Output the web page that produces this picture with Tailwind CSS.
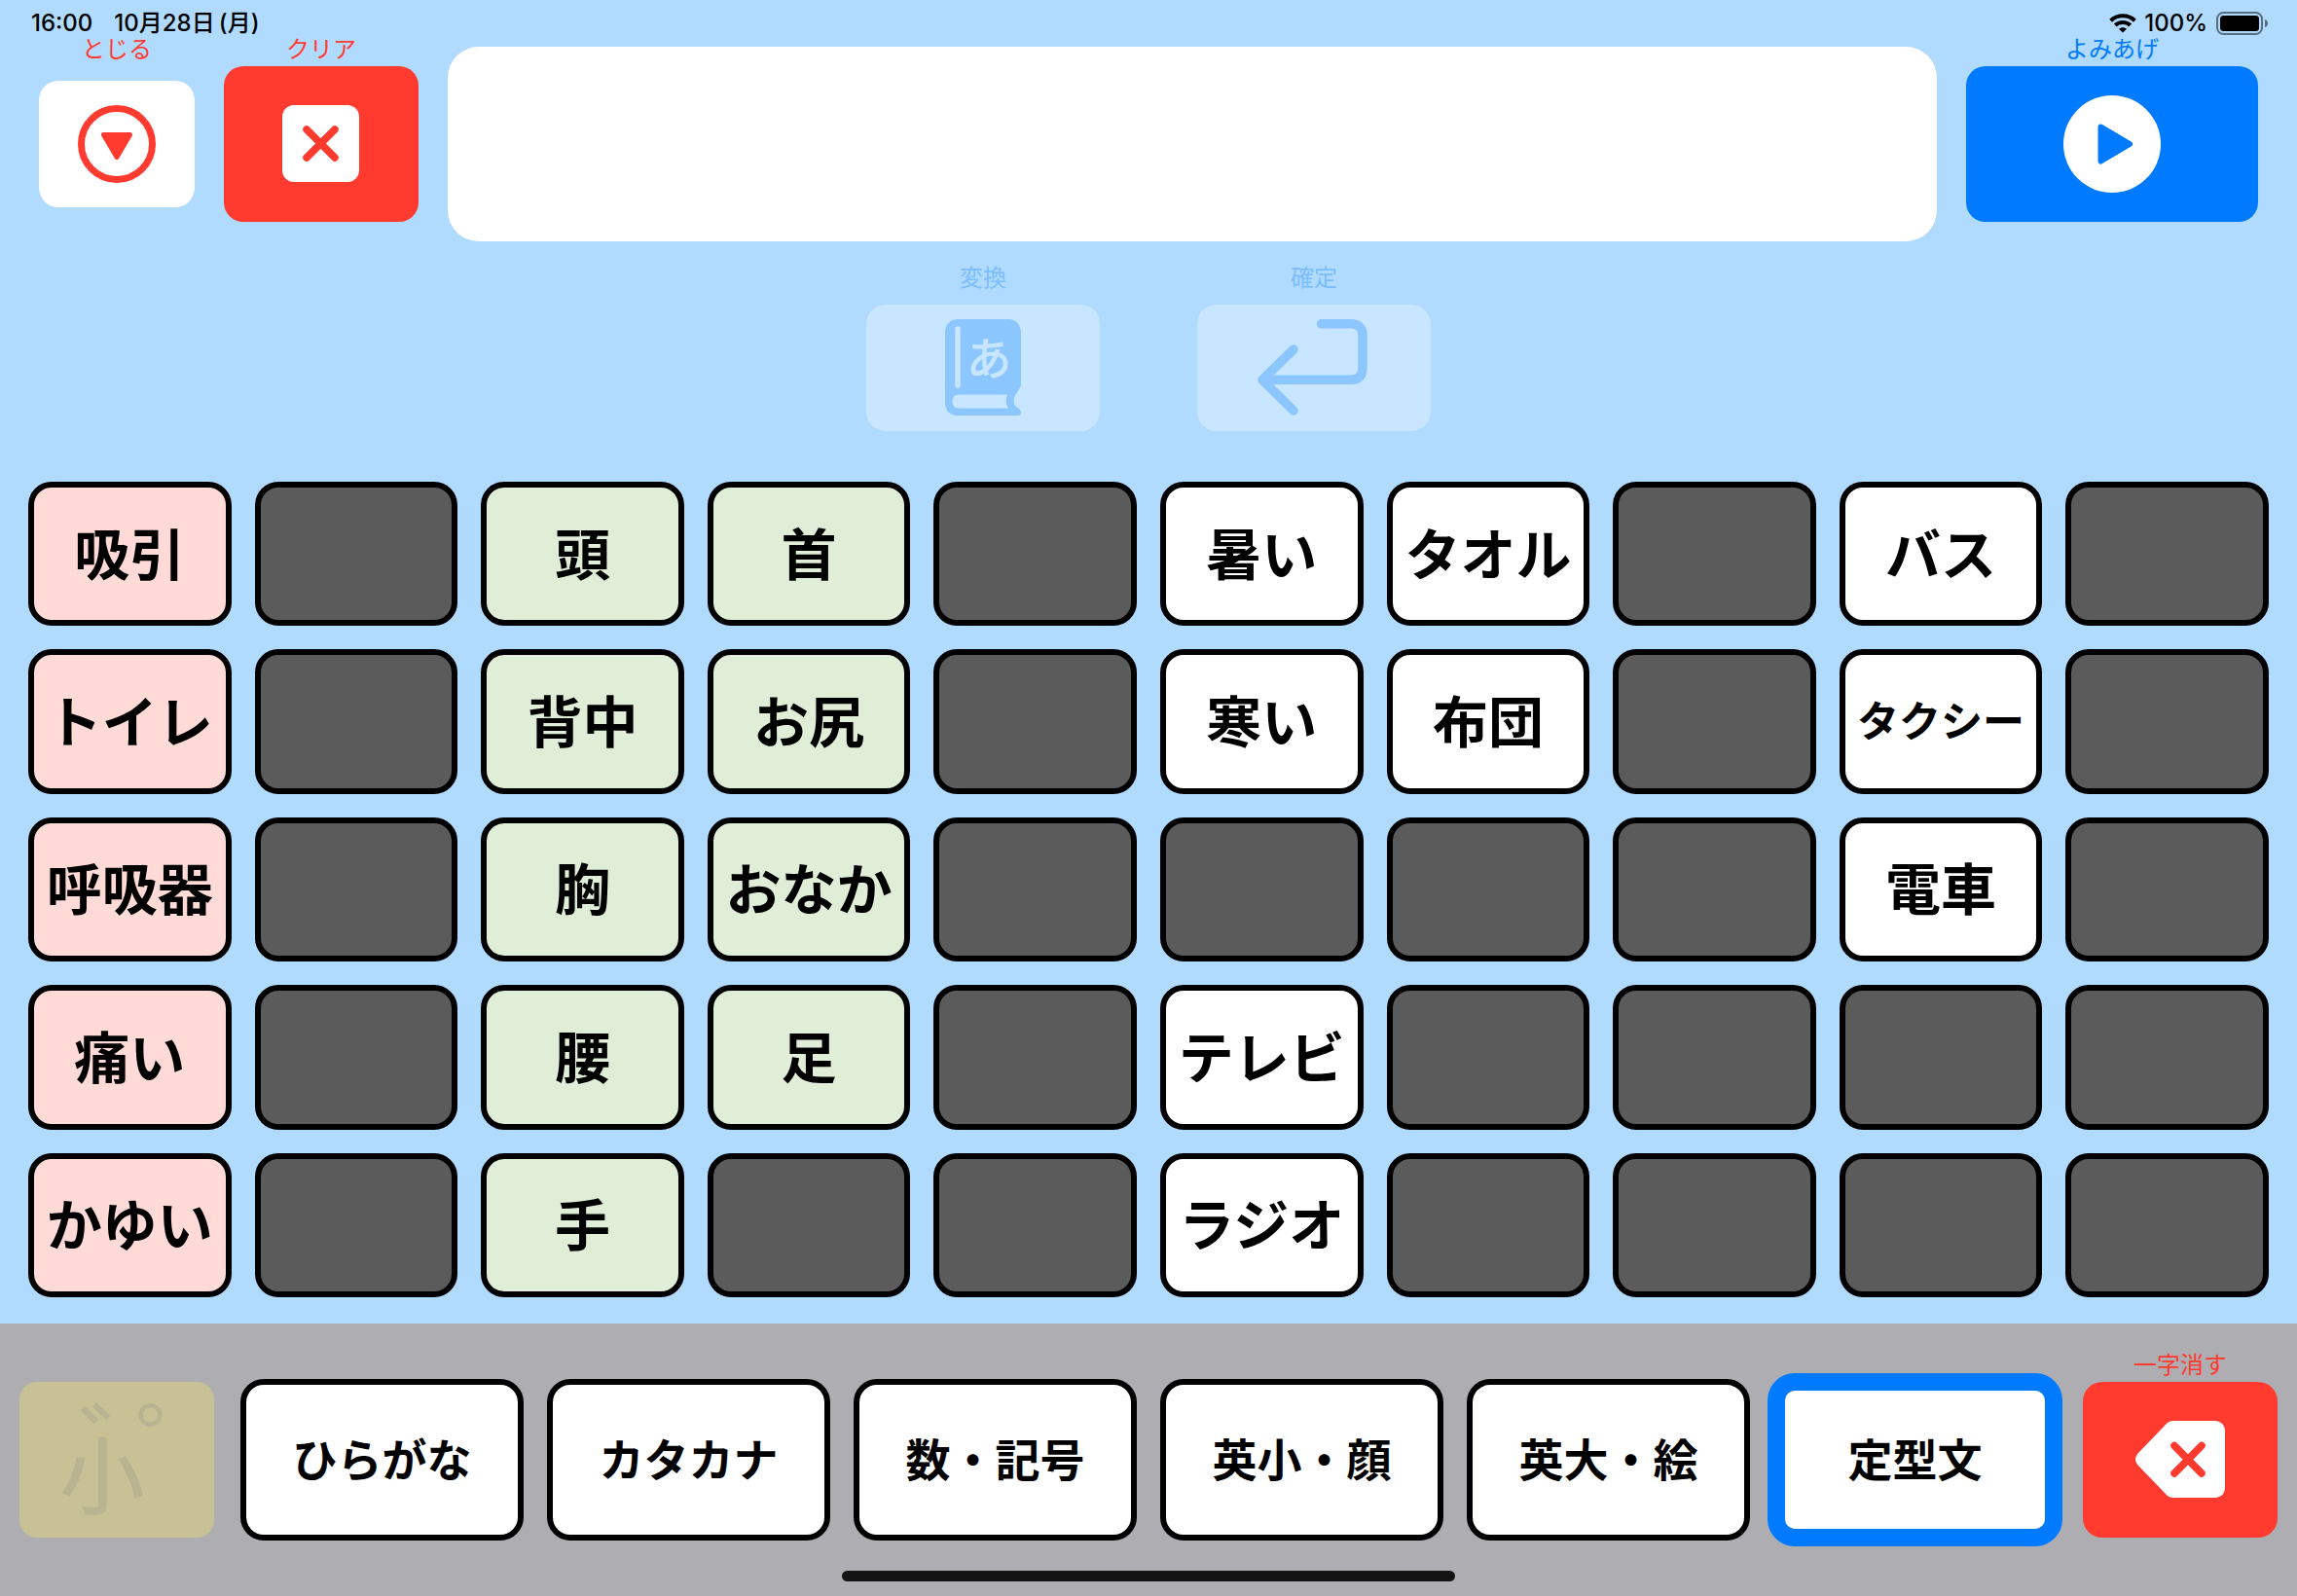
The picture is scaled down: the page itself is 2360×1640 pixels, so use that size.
<!DOCTYPE html>
<html lang="ja">
<head>
<meta charset="utf-8">
<meta name="viewport" content="width=device-width, initial-scale=1">
<title>定型文ボード</title>
<script src="https://cdn.jsdelivr.net/npm/@tailwindcss/browser@4"></script>
</head>
<body class="flex min-h-screen flex-col bg-[#b0dbff] font-['Noto_Sans_CJK_JP',sans-serif] text-black">

  <!-- Status bar -->
  <div class="flex h-9 items-center justify-between pt-3 pr-7 pl-8 font-['Inter','Noto_Sans_CJK_JP',sans-serif] text-2xl leading-6 font-medium">
    <div class="flex gap-[22px]"><span>16:00</span><span>10月28日&thinsp;(月)</span></div>
    <div class="flex items-center gap-2">
      <svg class="h-5 w-7" viewBox="0 0 28 20" aria-hidden="true">
        <g fill="none" stroke="#000" stroke-width="4">
          <path d="M1.600 7.200C8.400 .6 19.600 .6 26.400 7.200"/>
          <path d="M6.300 12C10.400 8 17.600 8 21.700 12"/>
        </g>
        <path d="M14 19.600L10 15.800C12 13.600 16 13.600 18 15.800Z"/>
      </svg>
      <span>100%</span>
      <svg class="h-6 w-14" viewBox="1 0 56 24" aria-hidden="true">
        <rect x="3" y="1" width="46" height="22" rx="6.500" fill="none" stroke="#000" stroke-opacity=".5" stroke-width="2"/>
        <rect x="6" y="4" width="40" height="16" rx="3.500"/>
        <path d="M52 8C56 9 56 15 52 16Z" fill-opacity=".5"/>
      </svg>
    </div>
  </div>

  <!-- Message bar -->
  <header class="flex gap-[30px] px-10">
    <div class="flex w-40 flex-col text-center text-2xl leading-[26px] text-[#ff3b30]">
      <label for="close">とじる</label>
      <div class="mt-1.5 flex h-40 items-center">
        <button id="close" class="flex h-[130px] w-full items-center justify-center rounded-[20px] bg-white">
          <svg class="size-20" viewBox="0 0 80 80" aria-hidden="true">
            <circle cx="40" cy="40" r="36.500" fill="none" stroke="#ff3b30" stroke-width="7"/>
            <path d="M26.500 30.500H53.500L40 53.500Z" fill="#ff3b30" stroke="#ff3b30" stroke-width="5" stroke-linejoin="round"/>
          </svg>
        </button>
      </div>
    </div>
    <div class="flex w-50 flex-col text-center text-2xl leading-[26px] text-[#ff3b30]">
      <label for="clear">クリア</label>
      <button id="clear" class="mt-1.5 flex h-40 items-center justify-center rounded-[20px] bg-[#ff3b30]">
        <svg class="size-20" viewBox="0 0 80 80" aria-hidden="true">
          <rect x="0" y="0" width="79" height="79" rx="12" fill="#fff"/>
          <path d="M25 25L54 54M54 25L25 54" stroke="#ff3b30" stroke-width="7.500" stroke-linecap="round"/>
        </svg>
      </button>
    </div>
    <textarea aria-label="メッセージ" class="mt-3 h-50 min-w-0 flex-1 resize-none rounded-[32px] bg-white p-6 text-5xl outline-none"></textarea>
    <div class="flex w-75 flex-col text-center text-2xl leading-[26px] text-[#007aff]">
      <label for="speak">よみあげ</label>
      <button id="speak" class="mt-1.5 flex h-40 items-center justify-center rounded-[20px] bg-[#007aff]">
        <svg class="size-25" viewBox="0 0 100 100" aria-hidden="true">
          <circle cx="50" cy="50" r="50" fill="#fff"/>
          <path d="M38.500 32.500L68 50L38.500 67.500Z" fill="#007aff" stroke="#007aff" stroke-width="6" stroke-linejoin="round"/>
        </svg>
      </button>
    </div>
  </header>

  
  <div class="mt-5 flex justify-center gap-25 text-center text-2xl leading-8 text-[#7bbeff]">
    <div class="flex w-60 flex-col gap-[13px]">
      <label for="convert">変換</label>
      <button id="convert" disabled class="flex h-[130px] items-center justify-center rounded-[20px] bg-[#c8e6ff]">
        <svg class="h-25 w-20" viewBox="-1 0 80 100" aria-hidden="true">
          <path fill="#8cc6ff" fill-rule="evenodd" d="M13 0H65C73 0 78 6 78 14V66C78 73 70.500 76 70.500 84C70.500 91 78 91 78 96C78 98 77 99 75 99H13C5 99 0 94 0 85V14C0 6 5 0 13 0ZM14.500 77.500C10 77.500 7.500 80 7.500 84.500C7.500 89 10 91.500 14.500 91.500H65C62 87 62 82 64 77.500Z"/>
          <path d="M13 10V68" stroke="#c8e6ff" stroke-width="5.500" stroke-linecap="round"/>
          <text x="45" y="57" text-anchor="middle" font-size="46" fill="#c8e6ff" stroke="#c8e6ff" stroke-width="1" stroke-linejoin="round">あ</text>
        </svg>
      </button>
    </div>
    <div class="flex w-60 flex-col gap-[13px]">
      <label for="commit">確定</label>
      <button id="commit" disabled class="flex h-[130px] items-center justify-center rounded-[20px] bg-[#c8e6ff]">
        <svg class="h-25 w-29" viewBox="0 0 116 100" fill="none" stroke="#8cc6ff" stroke-width="9.500" stroke-linecap="round" stroke-linejoin="round" aria-hidden="true">
          <path d="M65.500 4.800H96C104 4.800 108 9 108 17V50C108 58 104 62.300 96 62.300H5M37 31L5 62.300L37 94"/>
        </svg>
      </button>
    </div>
  </div>

  <!-- Phrase board -->
  <main id="board" class="mt-[52px] mb-[27px] grid flex-1 auto-rows-fr grid-cols-10 gap-6 px-[29px] font-bold"></main>

  <!-- Keyboard switcher -->
  <footer class="flex h-70 flex-col items-center bg-[#aeadb2]">
    <div class="flex w-full flex-1 items-end gap-[27px] px-5">
      <button disabled aria-label="濁点・半濁点・小文字" class="mb-[3px] flex h-40 w-50 items-center justify-center rounded-[18px] bg-[#c7c195]">
        <svg class="h-40 w-50" viewBox="0 0 200 160" aria-hidden="true">
          <text x="42" y="129" font-size="86" fill="#b8b492" stroke="#b8b492" stroke-width="1.500">小</text>
          <g fill="none" stroke="#b8b492">
            <path d="M65 27L79 41M77 23L91 37" stroke-width="6.500"/>
            <circle cx="134.500" cy="34" r="9.800" stroke-width="4.500"/>
          </g>
        </svg>
      </button>
      <nav class="grid h-[166px] flex-1 grid-cols-6 gap-6 text-[46px] font-bold">
        <button class="rounded-3xl border-6 border-black bg-white pb-1.5">ひらがな</button>
        <button class="rounded-3xl border-6 border-black bg-white pb-1.5">カタカナ</button>
        <button class="rounded-3xl border-6 border-black bg-white pb-1.5">数・記号</button>
        <button class="rounded-3xl border-6 border-black bg-white pb-1.5">英小・顔</button>
        <button class="rounded-3xl border-6 border-black bg-white pb-1.5">英大・絵</button>
        <button aria-current="true" class="-m-1.5 rounded-[28px] border-18 border-[#007aff] bg-white pb-1.5">定型文</button>
      </nav>
      <div class="mb-[3px] flex w-50 flex-col text-center text-2xl leading-[26px] text-[#ff3b30]">
        <label for="delete">一字消す</label>
        <button id="delete" class="mt-1.5 flex h-40 items-center justify-center rounded-[20px] bg-[#ff3b30]">
          <svg class="h-20 w-23" viewBox="0 0 92 80" aria-hidden="true">
            <path d="M40 0H81C88 0 92 4 92 11V68C92 75 88 79 81 79H40C36 79 33 78 30 74L3 46C-1 41-1 38 3 33L30 5C33 1 36 0 40 0Z" fill="#fff"/>
            <path d="M40 25.500L68 54M68 25.500L40 54" stroke="#ff3b30" stroke-width="7.500" stroke-linecap="round"/>
          </svg>
        </button>
      </div>
    </div>
    <div class="mt-[31px] mb-[15px] h-[11px] w-[630px] rounded-full bg-[#141414]"></div>
  </footer>

<script>
  const tones = { r: 'bg-[#ffdad6]', g: 'bg-[#e0eed7]', w: 'bg-white', x: 'bg-[#5b5b5b]' };
  const rows = [
    ['r吸引', 'x', 'g頭', 'g首', 'x', 'w暑い', 'wタオル', 'x', 'wバス', 'x'],
    ['rトイレ', 'x', 'g背中', 'gお尻', 'x', 'w寒い', 'w布団', 'x', 'wタクシー', 'x'],
    ['r呼吸器', 'x', 'g胸', 'gおなか', 'x', 'x', 'x', 'x', 'w電車', 'x'],
    ['r痛い', 'x', 'g腰', 'g足', 'x', 'wテレビ', 'x', 'x', 'x', 'x'],
    ['rかゆい', 'x', 'g手', 'x', 'x', 'wラジオ', 'x', 'x', 'x', 'x'],
  ];
  const board = document.getElementById('board');
  for (const cell of rows.flat()) {
    const key = document.createElement('button');
    const phrase = cell.slice(1);
    const size = phrase.length > 3 ? 'text-[43px]' : 'text-[57px]';
    key.className = 'min-w-0 rounded-3xl border-6 border-black pb-1.5 leading-none whitespace-nowrap ' + size + ' ' + tones[cell[0]];
    key.textContent = phrase;
    if (!phrase) key.ariaLabel = '空き';
    board.append(key);
  }
</script>
</body>
</html>
